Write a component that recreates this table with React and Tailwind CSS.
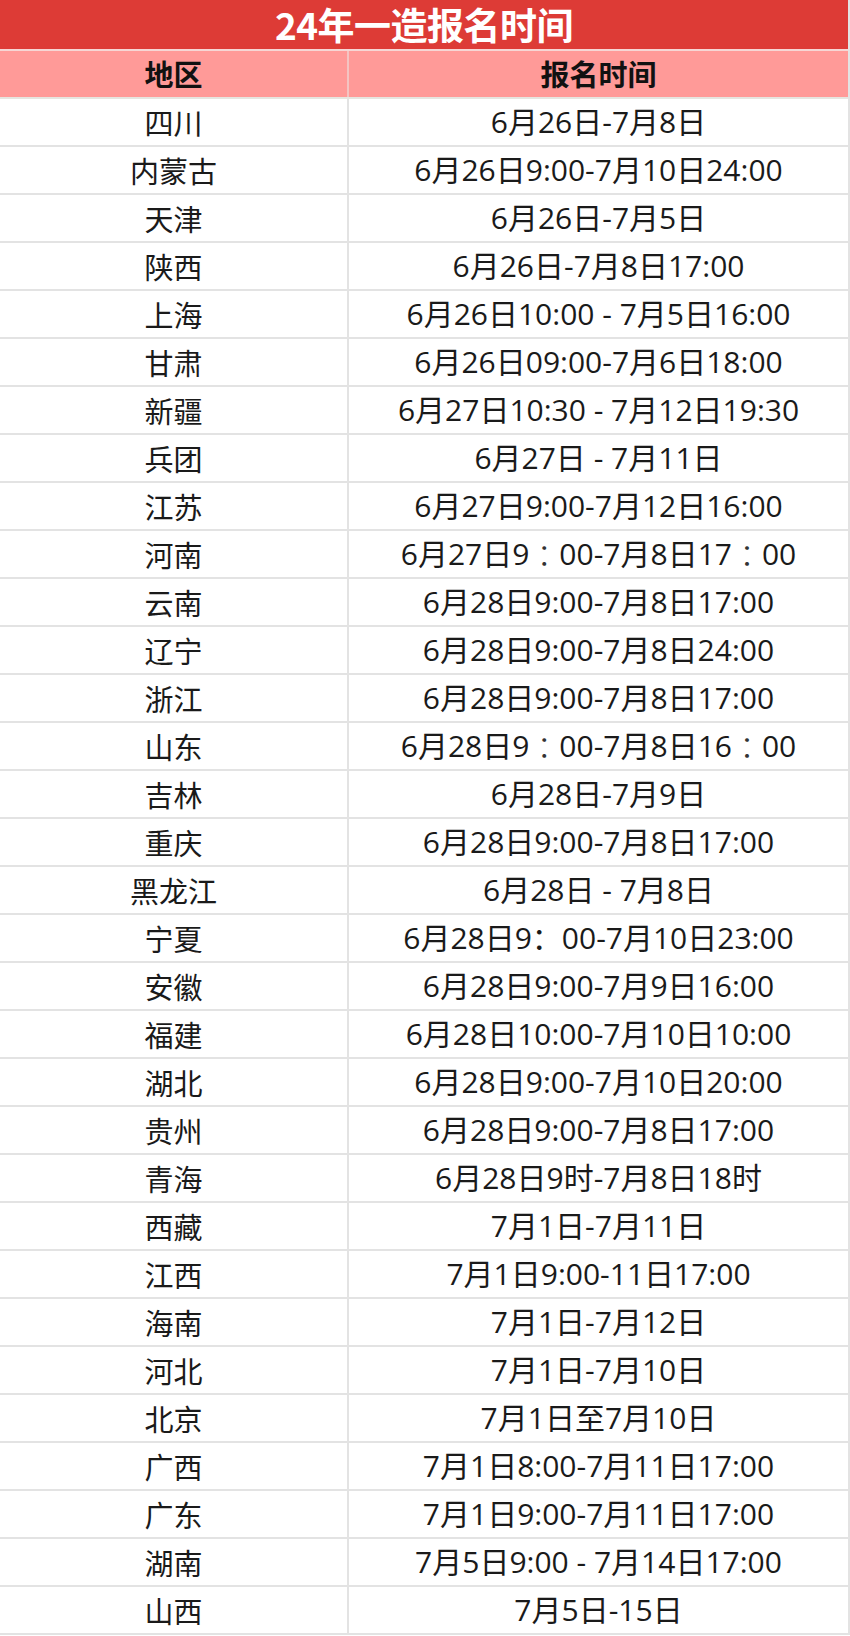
import React from "react";

const rows = [
  ["四川", "6月26日-7月8日"],
  ["内蒙古", "6月26日9:00-7月10日24:00"],
  ["天津", "6月26日-7月5日"],
  ["陕西", "6月26日-7月8日17:00"],
  ["上海", "6月26日10:00 - 7月5日16:00"],
  ["甘肃", "6月26日09:00-7月6日18:00"],
  ["新疆", "6月27日10:30 - 7月12日19:30"],
  ["兵团", "6月27日 - 7月11日"],
  ["江苏", "6月27日9:00-7月12日16:00"],
  ["河南", "JP:6月27日9|：|00-7月8日17|：|00"],
  ["云南", "6月28日9:00-7月8日17:00"],
  ["辽宁", "6月28日9:00-7月8日24:00"],
  ["浙江", "6月28日9:00-7月8日17:00"],
  ["山东", "JP:6月28日9|：|00-7月8日16|：|00"],
  ["吉林", "6月28日-7月9日"],
  ["重庆", "6月28日9:00-7月8日17:00"],
  ["黑龙江", "6月28日 - 7月8日"],
  ["宁夏", "6月28日9：00-7月10日23:00"],
  ["安徽", "6月28日9:00-7月9日16:00"],
  ["福建", "6月28日10:00-7月10日10:00"],
  ["湖北", "6月28日9:00-7月10日20:00"],
  ["贵州", "6月28日9:00-7月8日17:00"],
  ["青海", "6月28日9时-7月8日18时"],
  ["西藏", "7月1日-7月11日"],
  ["江西", "7月1日9:00-11日17:00"],
  ["海南", "7月1日-7月12日"],
  ["河北", "7月1日-7月10日"],
  ["北京", "7月1日至7月10日"],
  ["广西", "7月1日8:00-7月11日17:00"],
  ["广东", "7月1日9:00-7月11日17:00"],
  ["湖南", "7月5日9:00 - 7月14日17:00"],
  ["山西", "7月5日-15日"],
];

function TimeText({ text }) {
  if (text.startsWith("JP:")) {
    const parts = text.slice(3).split("|");
    return (
      <>
        {parts.map((p, i) =>
          p === "：" ? (
            <span key={i} className="font-light text-[#333] [font-family:'Noto_Sans_CJK_JP',sans-serif]">
              ：
            </span>
          ) : (
            <span key={i}>{p}</span>
          )
        )}
      </>
    );
  }
  return <>{text}</>;
}

export default function App() {
  return (
    <div className="w-[850px] bg-white text-[#1a1a1a] [font-family:'Open_Sans','Noto_Sans_CJK_SC',sans-serif]">
      <div className="border-r-2 border-[#e3e3e3]">
        <div className="h-[49px] bg-[#dd3b36] flex items-center justify-center">
          <span className="text-white font-bold text-[37px] leading-none tracking-[-0.5px] [font-family:'Noto_Sans_CJK_SC',sans-serif]">
            24年一造报名时间
          </span>
        </div>
        <div className="flex h-[50px] bg-[#ff9a98] border-t-2 border-[#f6d6d4] border-b-2 border-b-[#e6e6e0]">
          <div className="w-[349px] border-r-2 border-[#f4c4c2] flex items-center justify-center text-[29px] font-bold text-[#111] [font-family:'Noto_Sans_CJK_SC',sans-serif]">
            地区
          </div>
          <div className="flex-1 flex items-center justify-center text-[29px] font-bold text-[#111] [font-family:'Noto_Sans_CJK_SC',sans-serif]">
            报名时间
          </div>
        </div>
        {rows.map(([region, time], i) => (
          <div key={i} className="flex h-[48px] border-b-2 border-[#e3e3e3]">
            <div className="w-[349px] border-r-2 border-[#e3e3e3] flex items-center justify-center text-[29px] leading-none [font-family:'Noto_Sans_CJK_SC',sans-serif]">
              {region}
            </div>
            <div className="flex-1 flex items-center justify-center text-[30px] leading-none whitespace-pre">
              <TimeText text={time} />
            </div>
          </div>
        ))}
      </div>
    </div>
  );
}
